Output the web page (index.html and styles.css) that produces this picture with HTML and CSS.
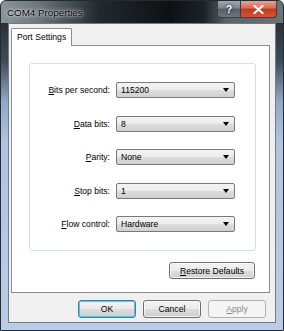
FILE: index.html
```html
<!DOCTYPE html>
<html lang="en">

<head>
  <meta charset="UTF-8">
  <meta name="viewport" content="width=device-width, initial-scale=1.0">
  <title>COM4 Properties</title>
  <link rel="stylesheet" href="styles.css">
</head>

<body>
  <div class="window">
    <div class="titlebar">
      <span class="title">COM4 Properties</span>
      <div class="caption-buttons">
        <span class="cap-btn help">?</span>
        <span class="cap-btn close">
          <svg width="11" height="9" viewBox="0 0 11 9">
            <path d="M1.5 1 L9.5 8 M9.5 1 L1.5 8" stroke="#fff" stroke-width="2.2" stroke-linecap="round" />
          </svg>
        </span>
      </div>
    </div>

    <div class="client">
      <div class="tabs">
        <div class="tab active">Port Settings</div>
      </div>
      <div class="panel">
        <div class="group">
          <label class="label"><u>B</u>its per second:</label>
          <div class="combo">115200</div>

          <label class="label"><u>D</u>ata bits:</label>
          <div class="combo">8</div>

          <label class="label"><u>P</u>arity:</label>
          <div class="combo">None</div>

          <label class="label"><u>S</u>top bits:</label>
          <div class="combo">1</div>

          <label class="label"><u>F</u>low control:</label>
          <div class="combo">Hardware</div>
        </div>
        <div class="restore-row">
          <button class="btn restore"><u>R</u>estore Defaults</button>
        </div>
      </div>
      <div class="actions">
        <button class="btn default">OK</button>
        <button class="btn">Cancel</button>
        <button class="btn" disabled><u>A</u>pply</button>
      </div>
    </div>
  </div>
</body>

</html>
```

FILE: styles.css
```css
body {
  margin: 0;
  padding: 0;
  font-family: "Liberation Sans", Arial, sans-serif;
  font-size: 8.6px;
  color: #000;
  background: #fff;
}

.window {
  width: 284px;
  height: 331px;
  box-sizing: border-box;
  border: 1px solid #262b30;
  border-radius: 6px 6px 0 0;
  padding: 0 7px 7px 7px;
  display: flex;
  flex-direction: column;
  background: linear-gradient(to bottom, #3a4148 0, #2a3137 22px, #3e4b58 60px, #8ea8c6 100px, #aec4df 140px, #b9cde6 100%);
}

/* title bar */
.titlebar {
  height: 22px;
  margin: 0 -7px;
  padding: 0 7px 0 6px;
  display: flex;
  align-items: flex-start;
  border-radius: 5px 5px 0 0;
  background: linear-gradient(to right, #8a959c 0, #6a747b 14%, #22282d 35%, #0e1114 60%, #1d2227 72%, #5b6369 80%, #6b7379 100%);
}

.title {
  font-size: 9.8px;
  color: #000;
  line-height: 24px;
  text-shadow: 0 0 5px rgba(255, 255, 255, 0.9), 0 0 2px rgba(255, 255, 255, 0.9);
}

.caption-buttons {
  margin-left: auto;
  margin-right: -1px;
  display: flex;
  height: 17px;
}

.cap-btn {
  display: flex;
  align-items: center;
  justify-content: center;
  box-sizing: border-box;
  height: 17px;
  border: 1px solid #3a3f44;
  border-top: 0;
  color: #fff;
  font-weight: bold;
  font-size: 10px;
}

.help {
  width: 23px;
  border-radius: 0 0 0 4px;
  border-right: 0;
  background: linear-gradient(to bottom, #a0a8ae 0, #7b858d 45%, #565f66 50%, #6c767e 100%);
  text-shadow: 0 0 3px #000;
}

.close {
  width: 37px;
  border-radius: 0 0 4px 0;
  background: linear-gradient(to bottom, #e8a493 0, #d36b55 45%, #c2391c 50%, #d2553a 100%);
}

/* client area */
.client {
  flex: 1;
  background: #f0f0f0;
  border: 1px solid #6f7c88;
  padding: 4px 5px 0 2px;
  display: flex;
  flex-direction: column;
}

.tabs {
  display: flex;
}

.tab {
  box-sizing: border-box;
  width: 61px;
  height: 18px;
  padding: 0 0 0 5px;
  line-height: 17px;
  border: 1px solid #898c95;
  border-bottom: 0;
  border-radius: 2px 2px 0 0;
  background: #fff;
  position: relative;
  z-index: 1;
}

.panel {
  margin-top: -1px;
  border: 1px solid #898c95;
  background: #fff;
  padding: 17px 13px 13px 17px;
}

.group {
  border: 1px solid #d5dfe5;
  border-radius: 3px;
  padding: 18px 0 18px 0;
  display: grid;
  grid-template-columns: 80px 119px;
  column-gap: 6px;
  row-gap: 17.5px;
  align-items: center;
}

.label {
  text-align: right;
  white-space: nowrap;
}

.combo {
  box-sizing: border-box;
  height: 16px;
  line-height: 14px;
  padding-left: 4px;
  border: 1px solid #7a7a7a;
  border-radius: 2px;
  background: linear-gradient(to bottom, #f3f3f3 0, #ebebeb 50%, #dddddd 51%, #d0d0d0 100%);
  position: relative;
}

.combo::after {
  content: "";
  position: absolute;
  right: 5px;
  top: 5px;
  border-left: 3px solid transparent;
  border-right: 3px solid transparent;
  border-top: 4px solid #000;
}

.restore-row {
  display: flex;
  justify-content: flex-end;
  margin-top: 11px;
  padding-right: 1px;
}

.btn {
  box-sizing: border-box;
  width: 58px;
  height: 18px;
  padding: 0;
  font-family: inherit;
  font-size: inherit;
  color: #000;
  border: 1px solid #707070;
  border-radius: 3px;
  background: linear-gradient(to bottom, #f2f2f2 0, #ebebeb 50%, #dddddd 51%, #cfcfcf 100%);
  box-shadow: inset 0 0 0 1px rgba(255, 255, 255, 0.7);
}

.restore {
  width: 86px;
  height: 17px;
}

.btn.default {
  border-color: #3c7fb1;
  box-shadow: inset 0 0 0 1px #5bc4e0;
}

.btn:disabled {
  color: #8d8d8d;
  border-color: #adb2b5;
  background: #f4f4f4;
  box-shadow: none;
}

.actions {
  display: flex;
  justify-content: flex-end;
  gap: 7px;
  margin-top: 7px;
  padding-right: 4px;
}
```
